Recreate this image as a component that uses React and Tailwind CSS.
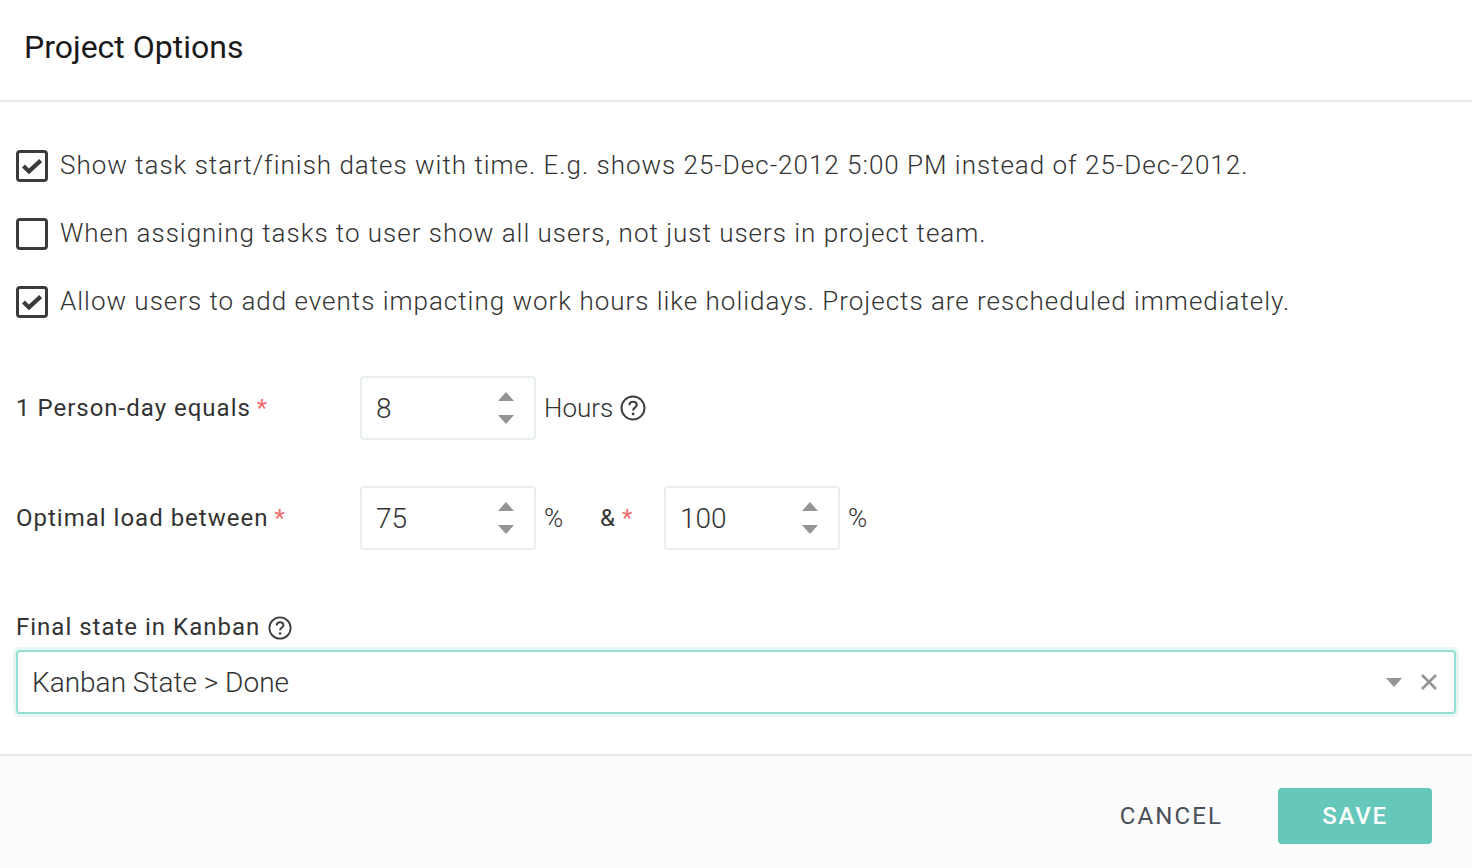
import { useState } from "react";

const Check = ({ checked }) => (
  <span className="w-8 h-8 shrink-0 rounded-[4px] border-[3.5px] border-[#3a3a3a] bg-white flex items-center justify-center">
    {checked && (
      <svg width="20" height="15" viewBox="0 0 20 15" fill="none">
        <path d="M1.4 7l5.6 5.4L18.6 1.6" stroke="#3a3a3a" strokeWidth="4.2" />
      </svg>
    )}
  </span>
);

const Help = ({ size = 26 }) => (
  <svg width={size} height={size} viewBox="0 0 26 26" fill="none" stroke="#3f3f3f" strokeWidth="2">
    <circle cx="13" cy="13" r="11.5" />
    <path d="M9.4 10.2c0-2.2 1.6-3.5 3.7-3.5s3.6 1.3 3.6 3.2c0 2.6-3.6 2.8-3.6 5.6" strokeWidth="2.1" />
    <circle cx="13.1" cy="19" r="1.4" fill="#3f3f3f" stroke="none" />
  </svg>
);

const Star = () => <span className="text-[#ef6b6b] ml-[6px]">*</span>;

const NumberBox = ({ value }) => (
  <div className="w-[176px] h-[64px] rounded-[4px] border-2 border-[#e8edf0] bg-white flex items-center pl-[14px] pr-[20px] justify-between">
    <span className="pt-[2px] text-[28px] font-light text-[#333]">{value}</span>
    <span className="flex flex-col gap-[14px]">
      <svg width="16" height="9" viewBox="0 0 16 9" className="block"><path d="M8 0l8 9H0z" fill="#949494" /></svg>
      <svg width="16" height="9" viewBox="0 0 16 9" className="block"><path d="M8 9L0 0h16z" fill="#949494" /></svg>
    </span>
  </div>
);

const options = [
  { text: "Show task start/finish dates with time. E.g. shows 25-Dec-2012 5:00 PM instead of 25-Dec-2012.", on: true },
  { text: "When assigning tasks to user show all users, not just users in project team.", on: false },
  { text: "Allow users to add events impacting work hours like holidays. Projects are rescheduled immediately.", on: true },
];

export default function App() {
  const [opts] = useState(options);

  return (
    <div className="w-[1472px] h-[868px] bg-white flex flex-col overflow-hidden font-['Roboto',sans-serif] text-[#333]">
      <div className="h-[102px] shrink-0 border-b-2 border-[#e8e8e8] pl-6 pt-[25px]">
        <h1 className="text-[32px] leading-[44px] text-[#1a1a1a]">Project Options</h1>
      </div>

      <div className="flex-1 px-4 pt-[48px]">
        <div className="flex flex-col gap-[36px]">
          {opts.map((o) => (
            <label key={o.text} className="flex items-center gap-3 h-8">
              <Check checked={o.on} />
              <span className="pb-[2px] text-[26px] font-light tracking-[0.985px] text-[#333] whitespace-nowrap">{o.text}</span>
            </label>
          ))}
        </div>

        <div className="flex items-center mt-[58px] h-[64px]">
          <span className="w-[344px] text-[24px] tracking-[1px] text-[#333]">1 Person-day equals<Star /></span>
          <NumberBox value="8" />
          <span className="ml-2 text-[26px] font-light">Hours</span>
          <span className="ml-[7px] flex"><Help /></span>
        </div>

        <div className="flex items-center mt-[46px] h-[64px]">
          <span className="w-[344px] text-[24px] tracking-[1px] text-[#333]">Optimal load between<Star /></span>
          <NumberBox value="75" />
          <span className="ml-2 w-[56px] text-[26px] font-light">%</span>
          <span className="w-[64px] text-[24px]">&amp;<span className="ml-px"><Star /></span></span>
          <NumberBox value="100" />
          <span className="ml-2 text-[26px] font-light">%</span>
        </div>

        <div className="flex items-center gap-2 mt-[60px] h-[36px] text-[24px] tracking-[1px]">
          <span className="pb-[2px]">Final state in Kanban</span> <Help size={24} />
        </div>

        <div className="mt-[4px] h-[64px] rounded-[4px] border-2 border-[#93dfd3] shadow-[0_0_0_3px_#e8f7f5] bg-white flex items-center pl-[14px] pr-[16px]">
          <span className="pt-[2px] flex-1 text-[28px] font-light text-[#333]">Kanban State &gt; Done</span>
          <svg width="16" height="9" viewBox="0 0 16 9" className="mr-[18px]"><path d="M8 9L0 0h16z" fill="#949494" /></svg>
          <svg width="18" height="18" viewBox="0 0 18 18" fill="none"><path d="M2 2l14 14M16 2L2 16" stroke="#949494" strokeWidth="2.6" /></svg>
        </div>
      </div>

      <div className="h-[114px] shrink-0 border-t-2 border-[#e8ebee] bg-[#fbfbfb] flex items-center justify-end pr-10 pt-2">
        <button className="text-[24px] tracking-[2.1px] text-[#4b4f57] mr-[55px]">CANCEL</button>
        <button className="w-[154px] h-[56px] rounded-[4px] bg-[#66c7bb] text-white text-[24px] font-medium tracking-[1.7px]">SAVE</button>
      </div>
    </div>
  );
}
